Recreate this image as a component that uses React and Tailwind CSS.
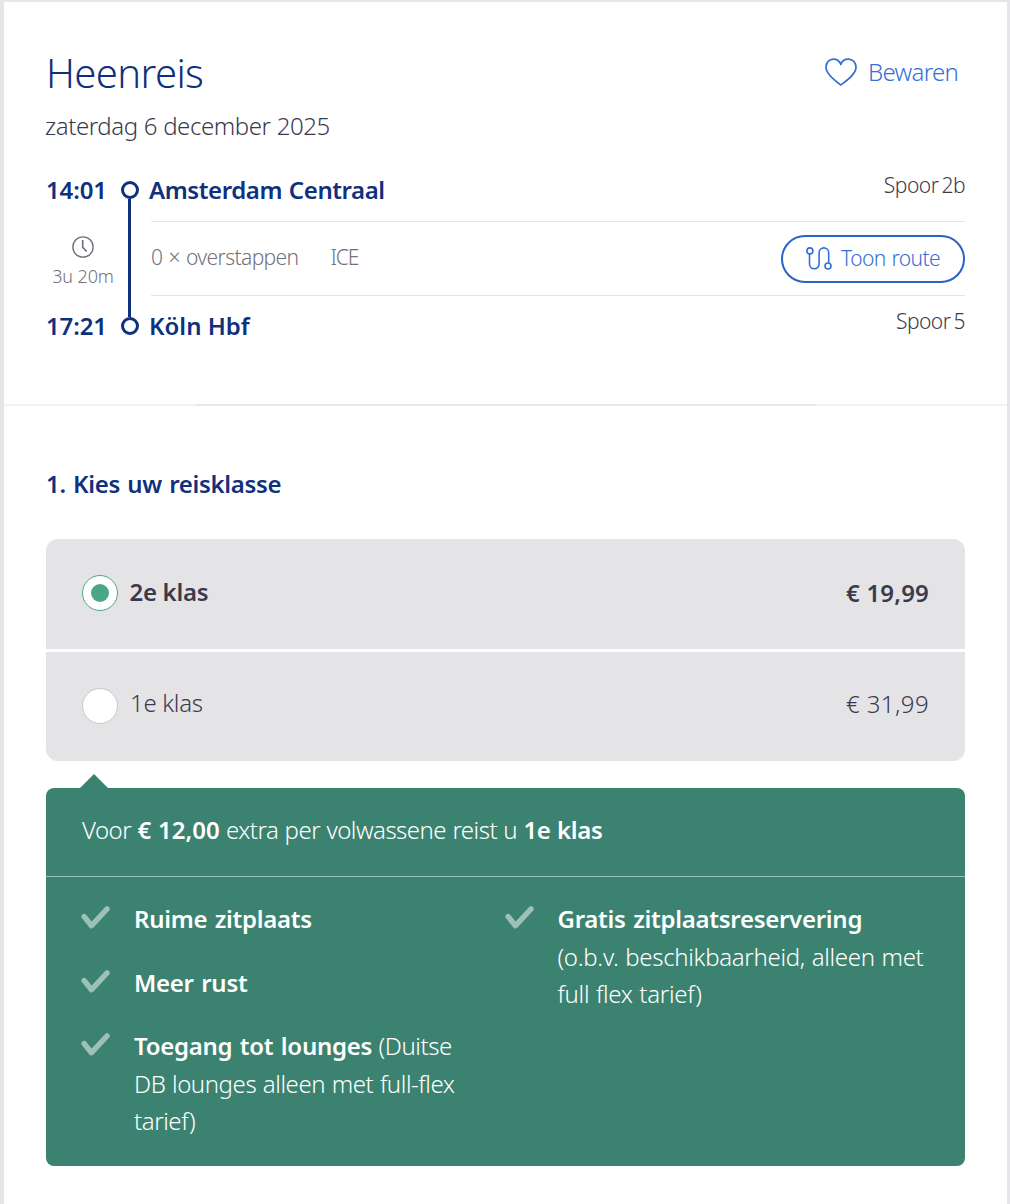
const HeartIcon = () => (
  <svg width="32" height="28" viewBox="0 0 32 28" fill="none" stroke="currentColor" strokeWidth="1.7" strokeLinejoin="round">
    <path d="M15.8 27C10 22.8 1 16.2 1 9.3C1 4.5 4.4 1.2 8.3 1.2C12 1.2 14.8 3.4 15.8 6.6C16.8 3.4 19.6 1.2 23.4 1.2C27.6 1.2 31 4.5 31 9.3C31 16.2 21.6 22.8 15.8 27Z" />
  </svg>
);

const RouteIcon = () => (
  <svg width="28" height="26" viewBox="0 0 28 26" fill="none" stroke="currentColor" strokeWidth="1.6">
    <circle cx="3.9" cy="4.9" r="3" />
    <path d="M3.5 8V18a4.8 4.8 0 0 0 9.6 0V6.7a4.8 4.8 0 0 1 9.6 0V16.8" />
    <circle cx="22" cy="20" r="3" />
  </svg>
);

const ClockIcon = () => (
  <svg width="22" height="22" viewBox="0 0 22 22" fill="none" stroke="currentColor" strokeWidth="1.4">
    <circle cx="11" cy="11" r="10.1" />
    <path d="M10.7 4V11.4L14.7 15.5" strokeWidth="1.7" />
  </svg>
);

const CheckIcon = () => (
  <svg className="mt-[6px] shrink-0 text-[#9dc1b7]" width="29" height="23" viewBox="0 0 29 23" fill="none" stroke="currentColor" strokeWidth="5.5" strokeLinecap="round" strokeLinejoin="round">
    <path d="M3.2 10.6L10.5 19.7L26 3" />
  </svg>
);

const Stop = () => (
  <div className="size-[18px] shrink-0 rounded-full border-[3px] border-[#0f307d]" />
);

const Benefit = ({ title, children }) => (
  <li className="flex gap-6">
    <CheckIcon />
    <p className="leading-[37.5px] tracking-[-0.43px] [word-spacing:0.8px]">
      <b className="font-[640] tracking-[-0.28px] [word-spacing:1.6px]">{title}</b>
      {children}
    </p>
  </li>
);

const TripHeader = () => {
  return (
    <header className="px-[42px] pt-[47px] pb-[60px]">
      <div className="flex justify-between">
        <h1 className="text-[40px] leading-12 tracking-[-0.6px] text-[#0f307d]">Heenreis</h1>
        <button className="flex h-12 items-center gap-[11px] pr-[7px] pb-[3px] tracking-[-0.72px] text-[#356fd6]">
          <HeartIcon />
          Bewaren
        </button>
      </div>
      <p className="mt-[11px] -ml-px leading-9 tracking-[-0.42px] [word-spacing:0.3px]">zaterdag 6 december 2025</p>

      <div className="mt-7 flex h-[172px]">
        <div className="flex w-[75px] flex-col justify-between">
          <span className="font-[640] leading-9 tracking-[-0.15px] text-[#0f307d]">14:01</span>
          <div className="-mb-2 flex flex-col items-center gap-1.5 pr-px text-[#72717e]">
            <ClockIcon />
            <span className="text-lg leading-6 tracking-[-0.1px]">3u 20m</span>
          </div>
          <span className="font-[640] leading-9 tracking-[-0.15px] text-[#0f307d]">17:21</span>
        </div>
        <div className="flex flex-col items-center py-[9px]">
          <Stop />
          <div className="mr-px w-[3px] grow bg-[#0f307d]" />
          <Stop />
        </div>
        <div className="ml-3 grow">
          <div className="flex h-[50px] items-start justify-between border-b border-[#e4e4e6]">
            <span className="-ml-0.5 font-[640] leading-9 tracking-[-0.42px] text-[#0f307d] [word-spacing:1px]">Amsterdam Centraal</span>
            <span className="pt-px text-[21px] leading-6 tracking-[-0.5px] [word-spacing:-2px]">Spoor 2b</span>
          </div>
          <div className="flex h-[74px] items-center justify-between border-b border-[#e4e4e6]">
            <div className="flex gap-8 pb-1 text-[21px] leading-6 tracking-[-0.6px] text-[#72717e] [word-spacing:1.2px]">
              <span>0 × overstappen</span>
              <span className="tracking-[-1.2px]">ICE</span>
            </div>
            <button className="mt-px flex h-12 items-center gap-[7px] rounded-full border-[2.5px] border-[#2a62c8] px-[23px] text-[21px] tracking-[-0.6px] text-[#356fd6] [word-spacing:1px]">
              <RouteIcon />
              <span className="pb-0.5 leading-6">Toon route</span>
            </button>
          </div>
          <div className="flex items-start justify-between pt-3">
            <span className="-ml-0.5 font-[640] leading-9 text-[#0f307d]">Köln Hbf</span>
            <span className="pt-px text-[21px] leading-6 tracking-[-0.5px] [word-spacing:-2px]">Spoor 5</span>
          </div>
        </div>
      </div>
    </header>
  );
};

const TravelClass = () => {
  return (
    <section className="px-[42px] pt-[60px]">
      <h2 className="font-[640] leading-9 tracking-[-0.32px] text-[#0f307d] [word-spacing:1.4px]">1. Kies uw reisklasse</h2>

      <div className="mt-[37px] flex flex-col gap-[3px] overflow-hidden rounded-xl">
        <label className="flex h-[110px] items-center bg-[#e4e4e6] px-9 pb-0.5 font-[640]">
          <span className="flex size-9 items-center justify-center rounded-full border border-[#4ca588] bg-white">
            <span className="size-[18px] rounded-full bg-[#4ca588]" />
          </span>
          <span className="ml-[11.5px] grow pb-0.5 tracking-[-0.3px]">2e klas</span>
          <span className="tracking-[0.2px]">€ 19,99</span>
        </label>
        <label className="flex h-[109px] items-center bg-[#e4e4e6] px-9 pb-0.5">
          <span className="size-9 rounded-full border border-[#c9c9ce] bg-white" />
          <span className="ml-3 grow pb-1.5 tracking-[-0.3px]">1e klas</span>
          <span className="pb-1 tracking-[0.4px]">€ 31,99</span>
        </label>
      </div>

      <svg className="mt-[13px] ml-[34px] block text-[#3b8370]" width="28" height="14" viewBox="0 0 28 14" fill="currentColor">
        <path d="M14 0L28 14H0Z" />
      </svg>
      <div className="rounded-lg bg-[#3b8370] text-white">
        <p className="flex h-[89px] items-center border-b border-[#9dc1b7] px-9 pb-1">
          <span className="tracking-[-0.52px] whitespace-pre [word-spacing:0.6px]">
            Voor <b className="font-[640] tracking-normal">€ 12,00</b> extra per volwassene reist u{" "}
            <b className="font-[640] tracking-[-0.35px]">1e klas</b>
          </span>
        </p>
        <div className="grid grid-cols-2 px-9 pt-[23px] pb-[26px]">
          <ul className="-ml-px flex flex-col gap-[26px] pr-6">
            <Benefit title="Ruime zitplaats" />
            <Benefit title="Meer rust" />
            <Benefit title="Toegang tot lounges"> (Duitse DB lounges alleen met full-flex tarief)</Benefit>
          </ul>
          <ul className="-ml-px">
            <Benefit title="Gratis zitplaatsreservering">
              <span className="block tracking-[-0.3px]">(o.b.v. beschikbaarheid, alleen met full flex tarief)</span>
            </Benefit>
          </ul>
        </div>
      </div>
    </section>
  );
};

export default function App() {
  return (
    <main className="h-[1204px] overflow-hidden border-t-2 border-r-3 border-l-4 border-[#e6e6e8] bg-white font-['Noto_Sans',sans-serif] text-2xl font-[340] text-[#3b3a4c]">
      <TripHeader />
      <div className="flex h-0.5 justify-center bg-[#f2f2f3]">
        <div className="w-[620px] bg-[#e8e8ea]" />
      </div>
      <TravelClass />
    </main>
  );
}
